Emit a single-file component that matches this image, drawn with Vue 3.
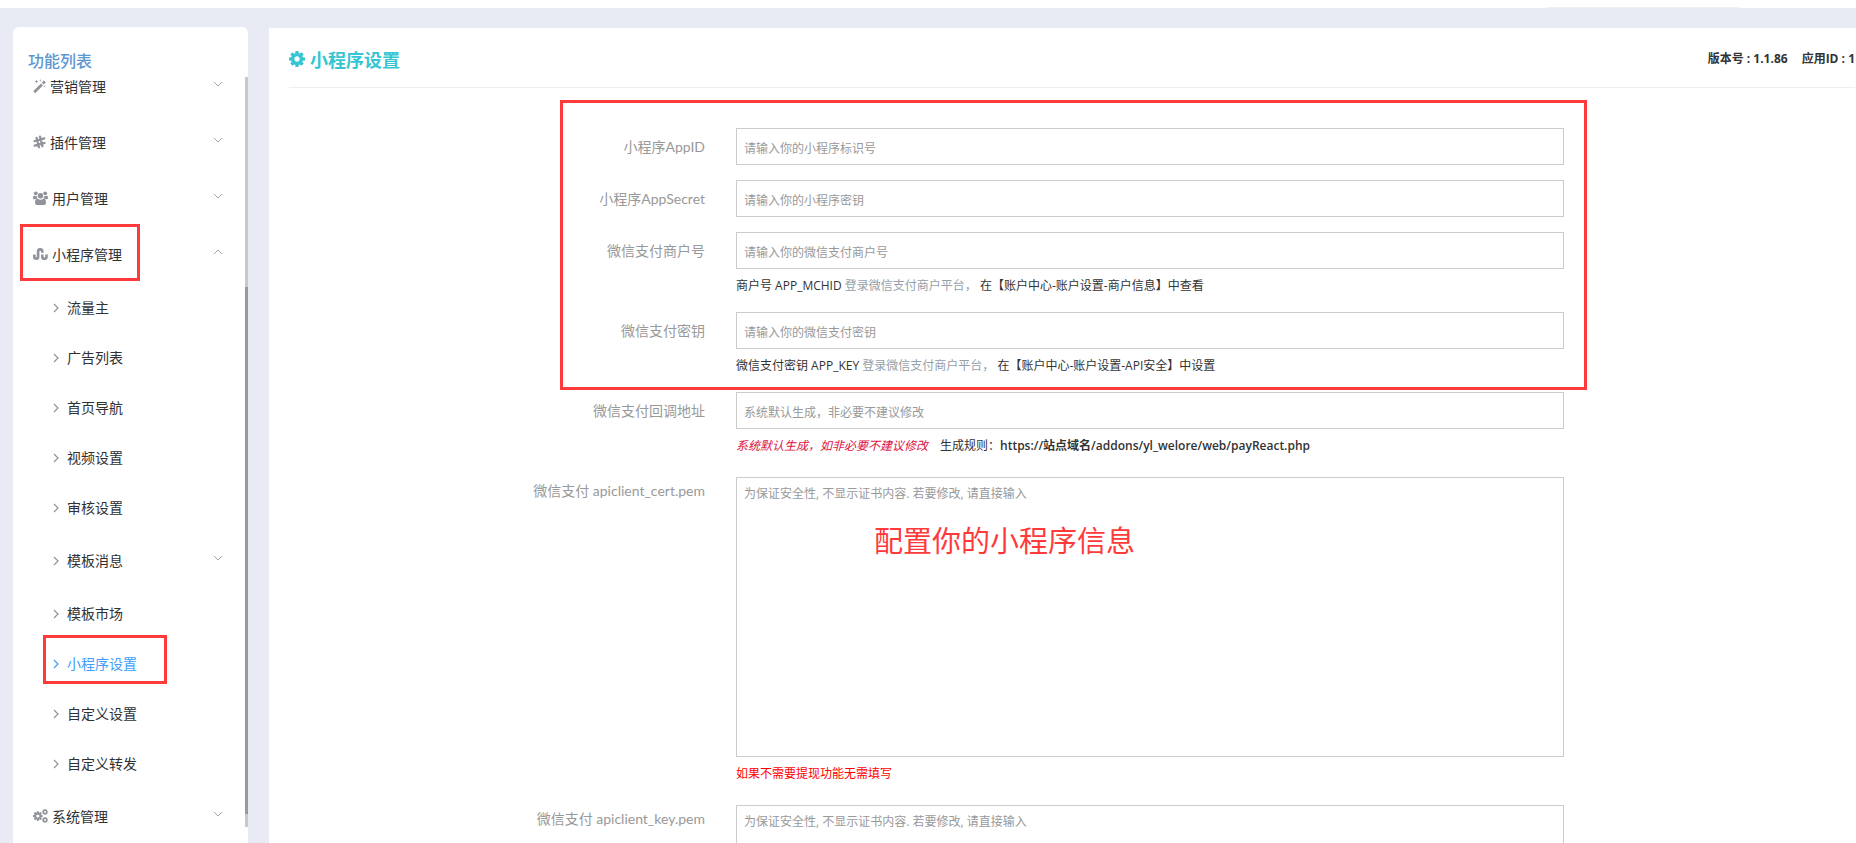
<template>
  <div class="page">
    <div class="topbar"><span class="topbar-tab"></span></div>
    <div class="body">
      <aside class="sidebar">
        <h2 class="sidebar-title">功能列表</h2>
        <div class="scroll">
          <nav class="menu">
            <template v-for="item in menu" :key="item.name">
              <button type="button" class="menu-item">
                <svg class="icon" :width="item.width" height="14" :viewBox="`0 0 ${item.width} 14`">
                  <g v-if="item.icon === 'magic'">
                    <path d="M1.200 13.200 9 5.400M9.800 4.600l2-2" stroke="#909399" stroke-width="2.800" fill="none" />
                    <path d="M3.500.5l.5 1.500 1.500.5L4 3l-.5 1.500L3 3l-1.500-.5L3 2zM7.500 0l.3 1 1 .3-1 .3-.3 1-.3-1-1-.3 1-.3zM11.800 6l.3 1 .9.300-.9.300-.3 1-.3-1-.9-.3.9-.3z" />
                  </g>
                  <g v-else-if="item.icon === 'plugin'">
                    <path d="M3.600 2.800 6 12.200M7 1.700l2.400 9.400M1.500 6l9.800-2.600M1.700 10.600l9.800-2.600" stroke="#909399" stroke-width="2.300" stroke-linecap="round" fill="none" />
                  </g>
                  <g v-else-if="item.icon === 'users'">
                    <circle cx="2.800" cy="2.300" r="1.900" />
                    <circle cx="12.200" cy="2.300" r="1.900" />
                    <path d="M0 6.500Q0 4.800 1.200 4.500q1.500 1 2.900.4-.3 1.300.5 2.500-1.300.1-2.100.9H1.400Q0 8.300 0 7.200zM15 6.500q0-1.700-1.200-2-1.500 1-2.900.4.300 1.300-.5 2.500 1.300.1 2.100.9h1.100q1.400 0 1.400-1.100z" />
                    <circle cx="7.500" cy="4.800" r="2.700" />
                    <path d="M2 11.500q0-3.500 2.600-3.800Q7.500 9.600 10.400 7.700 13 8 13 11.500q0 2.500-2 2.500H4q-2 0-2-2.500z" />
                  </g>
                  <g v-else-if="item.icon === 'program'" stroke="#909399" stroke-width="2.600" fill="none">
                    <path d="M1.300 7.500v2.200a1.900 1.900 0 0 0 3.800 0V4.500a2.100 2.100 0 0 1 4.200 0v1.300" />
                    <path d="M9.300 7.500v2.200a2.100 2.100 0 0 0 4.200 0V7.500" />
                  </g>
                  <g v-else>
                    <path :d="cog" transform="translate(-.8 1.400) scale(.0063)" />
                    <path :d="cog" transform="translate(8.500 -.6) scale(.0039)" />
                    <path :d="cog" transform="translate(8.500 7.400) scale(.0039)" />
                  </g>
                </svg>
                <span>{{ item.name }}</span>
                <svg class="arrow" width="10" height="12" viewBox="0 0 10 12">
                  <path :d="item.open ? 'M1 6l4-4 4 4' : 'M1 2l4 4 4-4'" />
                </svg>
                <i v-if="item.open" class="mark mark-menu"></i>
              </button>
              <template v-if="item.open">
                <a
                  v-for="sub in item.children"
                  :key="sub"
                  href="#"
                  class="sub-item"
                  :class="{ active: sub === current, tall: sub === '模板消息' }"
                  @click.prevent="current = sub"
                >
                  <svg class="caret" width="6" height="10" viewBox="0 0 6 10">
                    <path d="M1 1l4 4-4 4" stroke-width="1.200" />
                  </svg>
                  <span>{{ sub }}</span>
                  <svg v-if="sub === '模板消息'" class="arrow" width="10" height="12" viewBox="0 0 10 12">
                    <path d="M1 1l4 4 4-4" />
                  </svg>
                  <i v-if="sub === current" class="mark mark-sub"></i>
                </a>
              </template>
            </template>
          </nav>
          <div class="track"><div class="thumb"></div></div>
        </div>
      </aside>

      <main class="main">
        <header class="header">
          <h1 class="title">
            <svg width="16" height="16" viewBox="128 128 1536 1536"><path :d="cog" /></svg>
            小程序设置
          </h1>
          <div class="version">
            <span>版本号 : 1.1.86</span>
            <span>应用ID : 1</span>
          </div>
        </header>

        <form class="form" @submit.prevent>
          <div class="group">
            <div class="row">
              <label for="appid">小程序AppID</label>
              <div class="field">
                <input id="appid" v-model="form.appid" type="text" placeholder="请输入你的小程序标识号" />
              </div>
            </div>
            <div class="row">
              <label for="secret">小程序AppSecret</label>
              <div class="field">
                <input id="secret" v-model="form.secret" type="text" placeholder="请输入你的小程序密钥" />
              </div>
            </div>
            <div class="row">
              <label for="mchid">微信支付商户号</label>
              <div class="field">
                <input id="mchid" v-model="form.mchid" type="text" placeholder="请输入你的微信支付商户号" />
                <p class="hint">商户号 APP_MCHID <a href="#">登录微信支付商户平台，</a> 在【账户中心-账户设置-商户信息】中查看</p>
              </div>
            </div>
            <div class="row">
              <label for="paykey">微信支付密钥</label>
              <div class="field">
                <input id="paykey" v-model="form.paykey" type="text" placeholder="请输入你的微信支付密钥" />
                <p class="hint">微信支付密钥 APP_KEY <a href="#">登录微信支付商户平台，</a> 在【账户中心-账户设置-API安全】中设置</p>
              </div>
            </div>
            <i class="mark mark-form"></i>
          </div>
          <div class="row loose">
            <label for="notify">微信支付回调地址</label>
            <div class="field">
              <input id="notify" v-model="form.notify" type="text" placeholder="系统默认生成，非必要不建议修改" />
              <p class="hint">
                <em>系统默认生成，如非必要不建议修改</em>
                <span class="rule">生成规则：<b>https://站点域名/addons/yl_welore/web/payReact.php</b></span>
              </p>
            </div>
          </div>
          <div class="row loose large">
            <label for="cert">微信支付 apiclient_cert.pem</label>
            <div class="field">
              <textarea id="cert" v-model="form.cert" placeholder="为保证安全性, 不显示证书内容. 若要修改, 请直接输入"></textarea>
              <p class="hint warn">如果不需要提现功能无需填写</p>
              <strong class="note">配置你的小程序信息</strong>
            </div>
          </div>
          <div class="row loose large">
            <label for="key">微信支付 apiclient_key.pem</label>
            <div class="field">
              <textarea id="key" v-model="form.key" placeholder="为保证安全性, 不显示证书内容. 若要修改, 请直接输入"></textarea>
            </div>
          </div>
        </form>
      </main>
    </div>
  </div>
</template>
<script setup>
import { ref, reactive } from "vue";

const current = ref("小程序设置");
const form = reactive({
  appid: "",
  secret: "",
  mchid: "",
  paykey: "",
  notify: "",
  cert: "",
  key: "",
});
const menu = [
  { name: "营销管理", icon: "magic", width: 13 },
  { name: "插件管理", icon: "plugin", width: 13 },
  { name: "用户管理", icon: "users", width: 15 },
  {
    name: "小程序管理",
    icon: "program",
    width: 15,
    open: true,
    children: [
      "流量主",
      "广告列表",
      "首页导航",
      "视频设置",
      "审核设置",
      "模板消息",
      "模板市场",
      "小程序设置",
      "自定义设置",
      "自定义转发",
    ],
  },
  { name: "系统管理", icon: "cogs", width: 15 },
];
const cog =
  "M1152 896q0-106-75-181t-181-75-181 75-75 181 75 181 181 75 181-75 75-181zm512-109v222q0 12-8 23t-20 13l-185 28q-19 54-39 91 35 50 107 138 10 12 10 25t-9 23q-27 37-99 108t-94 71q-12 0-26-9l-138-108q-44 23-91 38-16 136-29 186-7 28-36 28h-222q-14 0-24.500-8.500t-11.500-21.500l-28-184q-49-16-90-37l-141 107q-10 9-25 9-14 0-25-11-126-114-165-168-7-10-7-23 0-12 8-23 15-21 51-66.500t54-70.500q-27-50-41-99l-183-27q-13-2-21-12.500t-8-23.500v-222q0-12 8-23t19-13l186-28q14-46 39-92-40-57-107-138-10-12-10-24 0-10 9-23 26-36 98.500-107.500t94.500-71.500q13 0 26 10l138 107q44-23 91-38 16-136 29-186 7-28 36-28h222q14 0 24.500 8.500t11.500 21.500l28 184q49 16 90 37l142-107q9-9 24-9 13 0 25 10 129 119 165 170 7 8 7 22 0 12-8 23-15 21-51 66.500t-54 70.500q26 50 41 98l183 28q13 2 21 12.500t8 23.500z";
</script>
<style>
body {
  margin: 0;
  overflow: hidden;
}
</style>
<style scoped>
.page {
  display: flex;
  flex-direction: column;
  height: 100vh;
  overflow: hidden;
  background: #e8ebf4;
  color: #333;
  font-family: "Open Sans", "Noto Sans CJK SC", sans-serif;
  font-size: 12px;
}
.page * {
  box-sizing: border-box;
}
input,
textarea,
button {
  font-family: inherit;
}
.topbar {
  display: flex;
  flex: none;
  justify-content: flex-end;
  align-items: flex-end;
  height: 8px;
  padding-right: 117px;
  background: #fff;
}
.topbar-tab {
  width: 192px;
  height: 1px;
  background: #f0f0f3;
}
.body {
  display: flex;
  flex: 1;
  gap: 21px;
  min-height: 0;
  padding: 19px 0 0 13px;
}
.sidebar {
  display: flex;
  flex: none;
  flex-direction: column;
  width: 235px;
  padding: 22px 0 16px;
  border-radius: 6px 6px 0 0;
  background: #fff;
}
.sidebar-title {
  flex: none;
  margin: 0;
  padding-left: 15px;
  line-height: 24px;
  height: 28px;
  font-size: 16px;
  font-weight: 500;
  color: #5c97d0;
}
.scroll {
  display: flex;
  flex: 1;
  min-height: 0;
  overflow: hidden;
}
.menu {
  flex: 1;
  margin-top: -18px;
}
.menu-item,
.sub-item {
  position: relative;
  display: flex;
  align-items: center;
  width: 100%;
  font-size: 14px;
  color: #303133;
  text-decoration: none;
}
.menu-item {
  gap: 4px;
  height: 56px;
  padding: 0 22px 2px 20px;
  border: none;
  background: none;
  text-align: left;
}
.sub-item {
  gap: 8px;
  height: 50px;
  padding: 0 22px 0 40px;
}
.sub-item span {
  padding-bottom: 2px;
}
.sub-item.tall {
  height: 56px;
}
.sub-item.active {
  color: #409eff;
}
.icon {
  flex: none;
  fill: #909399;
}
.arrow {
  margin-left: auto;
  fill: none;
  stroke: #a4a6ab;
}
.caret {
  fill: none;
  stroke: #909399;
}
.active .caret {
  stroke: #409eff;
}
.track {
  flex: none;
  width: 3px;
  padding-top: 210px;
  background: #c8c8c8;
}
.thumb {
  height: 527px;
  background: #999;
}
.mark {
  position: absolute;
  border: 3px solid #ff3a3a;
  pointer-events: none;
}
.mark-menu {
  top: -3px;
  left: 7px;
  width: 120px;
  height: 57px;
}
.mark-sub {
  top: -4px;
  left: 30px;
  width: 124px;
  height: 49px;
}
.mark-form {
  top: -28px;
  right: 17.1%;
  bottom: 2px;
  left: 17.3%;
}
.main {
  flex: 1;
  min-width: 0;
  margin-top: 1px;
  padding: 0 1px 0 20px;
  background: #fff;
}
.header {
  display: flex;
  justify-content: space-between;
  align-items: center;
  height: 60px;
  padding-top: 2px;
  border-bottom: 1px solid #eee;
}
.title {
  display: flex;
  align-items: center;
  gap: 5px;
  margin: 0;
  font-size: 18px;
  font-weight: 700;
  color: #36c6d3;
}
.title svg {
  fill: #36c6d3;
}
.version {
  display: flex;
  gap: 14px;
  padding-bottom: 2px;
  font-weight: 700;
}
.form {
  padding-top: 40px;
}
.group {
  position: relative;
}
.row {
  display: grid;
  grid-template-columns: 416fr 859fr 291fr;
  padding-bottom: 15px;
}
.row.loose {
  padding-bottom: 20px;
}
label {
  line-height: 37px;
  font-family: Lato, "Noto Sans CJK SC", sans-serif;
  font-size: 14px;
  text-align: right;
  white-space: nowrap;
  color: #999;
}
.large label {
  line-height: 28px;
}
.field {
  position: relative;
  padding-left: 31px;
}
input,
textarea {
  display: block;
  width: 100%;
  border: 1px solid #ccc;
  border-radius: 0;
  outline: none;
  background: #fff;
  color: #555;
  font-size: 12px;
}
input {
  height: 37px;
  padding: 4px 7px 0;
}
textarea {
  height: 280px;
  padding: 7px;
  line-height: 18px;
  resize: none;
}
input::placeholder,
textarea::placeholder {
  color: #999;
  opacity: 1;
}
.hint {
  margin: 7px 0 1px;
  line-height: 20px;
  white-space: nowrap;
}
.hint a {
  color: #95a0aa;
  text-decoration: none;
}
.hint em {
  color: #dd1144;
}
.rule {
  margin-left: 12px;
}
.rule b {
  line-height: 1;
  font-weight: 600;
}
.warn {
  color: #f00;
}
.note {
  position: absolute;
  top: 44px;
  left: 138px;
  padding-left: 31px;
  line-height: 40px;
  font-size: 29px;
  font-weight: 400;
  color: #ff3a3a;
  pointer-events: none;
}
</style>
